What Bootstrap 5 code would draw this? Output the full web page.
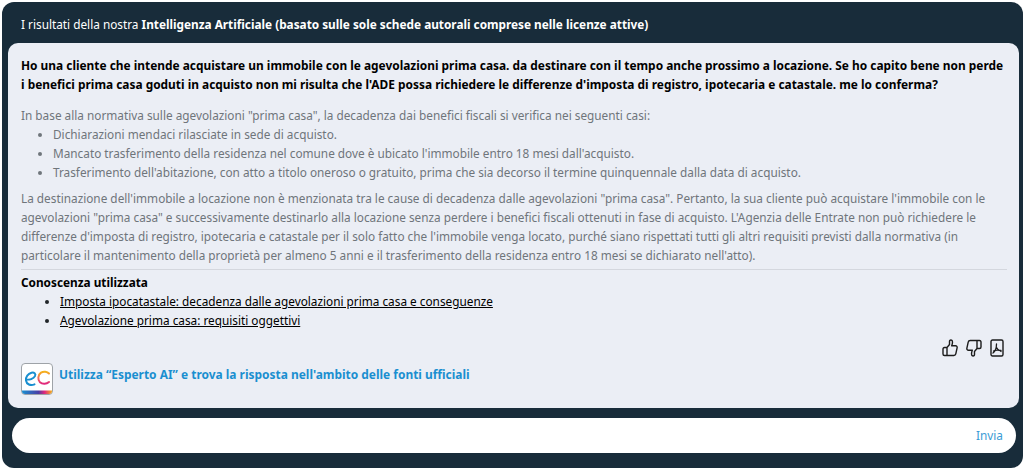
<!DOCTYPE html>
<html lang="it">
<head>
  <meta charset="UTF-8">
  <meta name="viewport" content="width=device-width, initial-scale=1.0">
  <title>Esperto AI</title>
  <link href="https://cdn.jsdelivr.net/npm/bootstrap@5.3.0/dist/css/bootstrap.min.css" rel="stylesheet">
  <style>
    body {
      background: #fff;
      font-family: "Noto Sans", "Open Sans", sans-serif;
      font-size: 11.8px;
      overflow: hidden;
    }
    .chat-shell {
      margin: 2px 1px 0 2px;
      height: 466px;
      background: #182c3a;
      border-radius: 12px;
      padding: 0 4px 0 6px;
    }
    .chat-title {
      height: 41px;
      color: #fff;
      padding-left: 13px;
      line-height: 45px;
    }
    .answer-box {
      height: 365px;
      background: #ebeef5;
      border-radius: 10px;
      padding: 13px 12px 0 13px;
      line-height: 19px;
    }
    .question {
      font-size: 11.9px;
      font-weight: 700;
      color: #000;
      margin: 0 0 12px;
    }
    .reply {
      color: #6f757b;
    }
    .reply p { margin: 0; }
    .reply ul { margin: 0 0 7px; padding-left: 32px; }
    .reply hr { margin: 4px 0 4px; border-color: #8f949a; }
    .kb-title { font-weight: 700; color: #000; line-height: 17px; }
    .kb-list { margin: 1px 0 0; padding-left: 39px; }
    .kb-list a { color: #000; }
    .rate-row { height: 19px; margin-top: 8px; padding-right: 3px; color: #1c1c1c; }
    .promo-logo {
      width: 32px;
      height: 32px;
      background: #fff;
      border: 1px solid #9ea3a8;
      border-radius: 4px;
    }
    .promo-row { margin-top: 6px; }
    .promo-link {
      color: #1a8fd0;
      font-weight: 700;
      font-size: 11.95px;
      text-decoration: none;
      margin: -9px 0 0 2px;
    }
    .ask-bar {
      height: 35px;
      margin: 10px 3px 0 4px;
      background: #fff;
      border-radius: 18px;
      padding-right: 13px;
    }
    .ask-input {
      border: 0;
      outline: 0;
      background: transparent;
    }
    .send-btn {
      color: #3a9bd5;
      background: none;
      border: 0;
      padding: 0;
      font-size: 11.8px;
    }
  </style>
</head>
<body>
  <div class="chat-shell">
    <div class="chat-title">I risultati della nostra <strong>Intelligenza Artificiale (basato sulle sole schede autorali comprese nelle licenze attive)</strong></div>
    <div class="answer-box">
      <p class="question">Ho una cliente che intende acquistare un immobile con le agevolazioni prima casa. da destinare con il tempo anche prossimo a locazione. Se ho capito bene non perde i benefici prima casa goduti in acquisto non mi risulta che l'ADE possa richiedere le differenze d'imposta di registro, ipotecaria e catastale. me lo conferma?</p>
      <div class="reply">
        <p>In base alla normativa sulle agevolazioni "prima casa", la decadenza dai benefici fiscali si verifica nei seguenti casi:</p>
        <ul>
          <li>Dichiarazioni mendaci rilasciate in sede di acquisto.</li>
          <li>Mancato trasferimento della residenza nel comune dove è ubicato l'immobile entro 18 mesi dall'acquisto.</li>
          <li>Trasferimento dell'abitazione, con atto a titolo oneroso o gratuito, prima che sia decorso il termine quinquennale dalla data di acquisto.</li>
        </ul>
        <p>La destinazione dell'immobile a locazione non è menzionata tra le cause di decadenza dalle agevolazioni "prima casa". Pertanto, la sua cliente può acquistare l'immobile con le agevolazioni "prima casa" e successivamente destinarlo alla locazione senza perdere i benefici fiscali ottenuti in fase di acquisto. L'Agenzia delle Entrate non può richiedere le differenze d'imposta di registro, ipotecaria e catastale per il solo fatto che l'immobile venga locato, purché siano rispettati tutti gli altri requisiti previsti dalla normativa (in particolare il mantenimento della proprietà per almeno 5 anni e il trasferimento della residenza entro 18 mesi se dichiarato nell'atto).</p>
        <hr>
      </div>
      <div class="kb-title">Conoscenza utilizzata</div>
      <ul class="kb-list">
        <li><a href="#">Imposta ipocatastale: decadenza dalle agevolazioni prima casa e conseguenze</a></li>
        <li><a href="#">Agevolazione prima casa: requisiti oggettivi</a></li>
      </ul>
      <div class="rate-row d-flex justify-content-end align-items-center gap-2">
        <svg width="16" height="18" viewBox="0 0 16 18" fill="none" stroke="currentColor" stroke-width="1.400" stroke-linejoin="round" stroke-linecap="round"><path d="M5 8.500H2.500C1.500 8.500 1 9 1 10v5c0 1 .5 1.500 1.500 1.500H5zM5 8.500L7.500 5.500V2.500C7.500 .5 10.500 .5 10.500 3c0 1.500-.4 2.800-.8 3.800h3.800c1.200 0 1.900 1 1.600 2.100l-1.300 6c-.2 1-1 1.600-2 1.600H5"/></svg>
        <svg width="16" height="18" viewBox="0 0 16 18" fill="none" stroke="currentColor" stroke-width="1.400" stroke-linejoin="round" stroke-linecap="round"><path d="M11 9.500h2.500c1 0 1.500-.5 1.500-1.500V3c0-1-.5-1.500-1.500-1.500H11zM11 9.500L8.500 12.500v3c0 2-3 2-3-.5 0-1.500.4-2.800.8-3.800H2.500C1.300 11.200.6 10.200.9 9.100l1.300-6c.2-1 1-1.600 2-1.600H11"/></svg>
        <svg width="14" height="18" viewBox="0 0 14 18" fill="none" stroke="currentColor" stroke-linejoin="round" stroke-linecap="round"><rect x="1" y="1" width="12" height="16" rx="1.500" stroke-width="1.400"/><path d="M3 14c2-1.500 3.500-4.500 3.500-9M6.500 8.500c.8 1.800 2.500 3.300 4.500 4M3.500 12c2-1.200 4.500-1.200 7.500-.5" stroke-width="1.300"/></svg>
      </div>
      <div class="promo-row d-flex align-items-center gap-1">
        <div class="promo-logo d-flex flex-column overflow-hidden flex-shrink-0">
          <svg width="30" height="30" viewBox="0 0 30 30" fill="none" stroke-width="2" stroke-linecap="round">
            <defs>
              <linearGradient id="ecBand" x1="0" x2="1" y1="0" y2="0"><stop offset="0" stop-color="#1a8fd0"/><stop offset=".55" stop-color="#4a3fa5"/><stop offset=".75" stop-color="#e0267e"/><stop offset="1" stop-color="#f5b21a"/></linearGradient>
              <linearGradient id="ecArc" x1="0" x2="0" y1="0" y2="1"><stop offset="0" stop-color="#f5b21a"/><stop offset=".5" stop-color="#f0705a"/><stop offset="1" stop-color="#e0267e"/></linearGradient>
            </defs>
            <path d="M4 15.500c3.500.5 7.500-.8 9-3.500 1.200-2.400-1-4-3.500-3.300C6 9.700 3.500 13 4 16.500c.5 3.800 4.500 5.500 8.500 3.800" stroke="#1a8fd0"/>
            <path d="M27 9.500c-1.800-2-5.500-2.500-8-.8-3.200 2.200-3.500 7-1 9.500 2.300 2.200 6.500 2 9-.2" stroke="url(#ecArc)"/>
            <rect x="0" y="26.500" width="30" height="3.500" fill="url(#ecBand)" stroke="none"/>
          </svg>
        </div>
        <a class="promo-link" href="#">Utilizza “Esperto AI” e trova la risposta nell'ambito delle fonti ufficiali</a>
      </div>
    </div>
    <form class="ask-bar d-flex align-items-center" onsubmit="return false">
      <input class="ask-input flex-grow-1" type="text" aria-label="Domanda">
      <button class="send-btn" type="submit">Invia</button>
    </form>
  </div>
  <script src="https://cdn.jsdelivr.net/npm/bootstrap@5.3.0/dist/js/bootstrap.bundle.min.js"></script>
</body>
</html>
